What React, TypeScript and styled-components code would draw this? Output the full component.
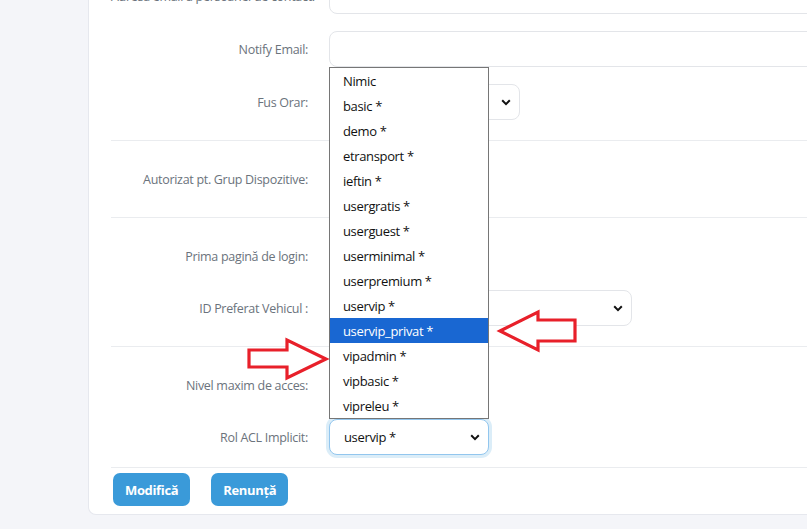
import styled, { createGlobalStyle } from 'styled-components';

const GlobalStyle = createGlobalStyle`
  html, body {
    margin: 0;
    padding: 0;
    background: #f4f5f9;
    overflow: hidden;
  }
  body {
    font-family: 'Open Sans', 'Noto Sans', 'Liberation Sans', sans-serif;
  }
`;

const Page = styled.div`
  width: 807px;
  height: 529px;
  overflow: hidden;
`;

const Card = styled.div`
  margin: -22px -30px 0 88px;
  background: #ffffff;
  border: 1px solid #e6e8ee;
  border-top: none;
  border-radius: 0 0 8px 8px;
  padding: 0 0 8px 22px;
`;

const Section = styled.div<{ $top?: number; $bottom?: number; $gap?: number }>`
  display: flex;
  flex-direction: column;
  gap: ${(p) => p.$gap ?? 16}px;
  padding: ${(p) => p.$top ?? 20}px 0 ${(p) => p.$bottom ?? 20}px;
  border-bottom: 1px solid #eaecef;
`;

const Row = styled.div`
  display: grid;
  grid-template-columns: 197px 1fr;
  column-gap: 21px;
  align-items: center;
  min-height: 36px;
`;

const Label = styled.label`
  text-align: right;
  font-size: 12.5px;
  letter-spacing: -0.3px;
  color: #6b737c;
  white-space: nowrap;
`;

const TextInput = styled.div`
  height: 36px;
  box-sizing: border-box;
  border: 1px solid #e3e5e9;
  border-radius: 8px;
  background: #fff;
`;

const SelectBox = styled.div<{ $width: number; $focus?: boolean }>`
  position: relative;
  width: ${(p) => p.$width}px;
  height: 36px;
  box-sizing: border-box;
  display: flex;
  align-items: center;
  justify-content: space-between;
  padding: 0 8px 0 14px;
  border: 1px solid ${(p) => (p.$focus ? '#92c6ee' : '#e3e5e9')};
  border-radius: 8px;
  background: #fff;
  box-shadow: ${(p) => (p.$focus ? '0 0 0 3px rgba(58, 154, 217, 0.18)' : 'none')};
  font-size: 13px;
  letter-spacing: -0.35px;
  color: #111;
`;

const Chevron = () => (
  <svg width="10" height="7" viewBox="0 0 10 7">
    <path d="M1.2 1.3 L5 5.1 L8.8 1.3" fill="none" stroke="#111" strokeWidth="2" />
  </svg>
);

const ListBox = styled.ul`
  position: absolute;
  left: -1px;
  bottom: calc(100% + 1px);
  width: 160px;
  margin: 0;
  padding: 0;
  list-style: none;
  background: #fff;
  border: 1px solid #767676;
  box-sizing: border-box;
  z-index: 5;
`;

const Option = styled.li<{ $active?: boolean }>`
  height: 25px;
  line-height: 26px;
  padding-left: 13px;
  font-size: 13px;
  letter-spacing: -0.35px;
  color: ${(p) => (p.$active ? '#fff' : '#111')};
  background: ${(p) => (p.$active ? '#1967d2' : 'transparent')};
`;

const Arrow = styled.svg<{ $left: number; $top: number }>`
  position: absolute;
  left: ${(p) => p.$left}px;
  top: ${(p) => p.$top}px;
  z-index: 6;
  overflow: visible;
`;

const Actions = styled.div`
  display: flex;
  gap: 21px;
  padding: 5px 0 0 2px;
`;

const Button = styled.button`
  height: 33px;
  padding: 0 12px;
  border: none;
  border-radius: 7px;
  background: #3a9ad9;
  color: #fff;
  font-family: 'Open Sans', 'Noto Sans', sans-serif;
  font-weight: 700;
  font-size: 13px;
  letter-spacing: -0.35px;
`;

const options = [
  'Nimic',
  'basic *',
  'demo *',
  'etransport *',
  'ieftin *',
  'usergratis *',
  'userguest *',
  'userminimal *',
  'userpremium *',
  'uservip *',
  'uservip_privat *',
  'vipadmin *',
  'vipbasic *',
  'vipreleu *',
];

export default function App() {
  return (
    <Page>
      <GlobalStyle />
      <Card>
        <Section $top={0} $gap={17}>
          <Row>
            <Label>Adresa email a persoanei de contact:</Label>
            <TextInput />
          </Row>
          <Row>
            <Label>Notify Email:</Label>
            <TextInput />
          </Row>
          <Row>
            <Label>Fus Orar:</Label>
            <SelectBox $width={191}>
              <span />
              <Chevron />
            </SelectBox>
          </Row>
        </Section>
        <Section>
          <Row>
            <Label>Autorizat pt. Grup Dispozitive:</Label>
            <div />
          </Row>
        </Section>
        <Section>
          <Row>
            <Label>Prima pagină de login:</Label>
            <div />
          </Row>
          <Row>
            <Label>ID Preferat Vehicul :</Label>
            <SelectBox $width={303}>
              <span />
              <Chevron />
            </SelectBox>
          </Row>
        </Section>
        <Section $bottom={12}>
          <Row>
            <Label>Nivel maxim de acces:</Label>
            <div />
          </Row>
          <Row>
            <Label>Rol ACL Implicit:</Label>
            <SelectBox $width={160} $focus>
              <span>uservip *</span>
              <Chevron />
              <ListBox>
                {options.map((o) => (
                  <Option key={o} $active={o === 'uservip_privat *'}>
                    {o}
                  </Option>
                ))}
              </ListBox>
              <Arrow $left={168} $top={-110} width="80" height="42" viewBox="0 0 80 42">
                <path
                  d="M2 21 L40 2 L40 10 L77 10 L77 31 L40 31 L40 40 Z"
                  fill="#fff"
                  stroke="#e8202a"
                  strokeWidth="3.2"
                  strokeLinejoin="miter"
                />
              </Arrow>
              <Arrow $left={-83} $top={-82} width="82" height="42" viewBox="0 0 82 42">
                <path
                  d="M2 12 L40 12 L40 2 L79 21 L40 40 L40 29 L2 29 Z"
                  fill="#fff"
                  stroke="#e8202a"
                  strokeWidth="3.2"
                  strokeLinejoin="miter"
                />
              </Arrow>
            </SelectBox>
          </Row>
        </Section>
        <Actions>
          <Button>Modifică</Button>
          <Button>Renunță</Button>
        </Actions>
      </Card>
    </Page>
  );
}
